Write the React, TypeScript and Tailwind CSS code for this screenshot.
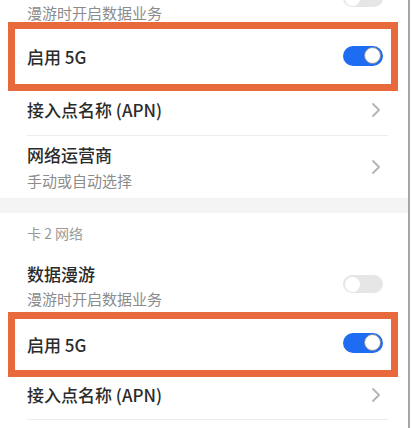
import React from "react";

const font = { fontFamily: '"Noto Sans CJK SC", "Noto Sans", sans-serif' };

function Chevron() {
  return (
    <svg width="10" height="16" viewBox="0 0 10 16" className="shrink-0 mr-[2px]">
      <polyline points="2,2 8,8 2,14" fill="none" stroke="#b3b3b3" strokeWidth="1.8" strokeLinecap="round" strokeLinejoin="round" />
    </svg>
  );
}

function Toggle({ on }: { on: boolean }) {
  return on ? (
    <div className="w-[40px] h-[20px] rounded-full bg-[#1d6cf2] flex items-center justify-end pr-[2px] shrink-0">
      <div className="w-[17px] h-[17px] rounded-full bg-white border border-[#7f8a99]" />
    </div>
  ) : (
    <div className="w-[40px] h-[18px] rounded-full bg-[#e6e6e6] flex items-center justify-start pl-[2px] shrink-0">
      <div className="w-[15px] h-[15px] rounded-full bg-white" />
    </div>
  );
}

function Box() {
  return <div className="absolute left-[8px] right-[10px] top-0 bottom-0 border-[7px] border-[#e8693c] pointer-events-none" />;
}

export default function App() {
  return (
    <div className="w-[411px] h-[428px] overflow-hidden bg-white" style={font}>
      <div className="w-[410px] h-[428px] border-r-2 border-[#a6a6a6] flex flex-col">
        {/* partial top row */}
        <div className="relative h-[22px] shrink-0 flex items-start justify-between pl-[27px] pr-[25px]">
          <div className="text-[15px] leading-[20px] text-[#8c8c8c] mt-[3px]">漫游时开启数据业务</div>
          <div className="-mt-[11px]">
            <Toggle on={false} />
          </div>
        </div>

        {/* 启用 5G */}
        <div className="relative h-[69px] shrink-0 flex items-center justify-between pl-[27px] pr-[25px]">
          <div className="text-[17px] leading-[24px] text-[#2b2b2b] font-medium">启用 5G</div>
          <div className="-mt-[2px]">
            <Toggle on />
          </div>
          <Box />
        </div>

        {/* APN */}
        <div className="h-[44px] shrink-0 flex items-start justify-between pl-[27px] pr-[25px] pt-[7px]">
          <div className="text-[17px] leading-[24px] text-[#2b2b2b] font-medium">接入点名称 (APN)</div>
          <div className="mt-[4px]">
            <Chevron />
          </div>
        </div>
        <div className="h-px bg-[#ececec] ml-[27px] mr-[20px] shrink-0" />

        {/* 网络运营商 */}
        <div className="h-[62px] shrink-0 flex items-center justify-between pl-[27px] pr-[25px]">
          <div className="flex flex-col">
            <div className="text-[17px] leading-[24px] text-[#2b2b2b] font-medium">网络运营商</div>
            <div className="text-[15px] leading-[20px] text-[#8c8c8c] mt-[4px]">手动或自动选择</div>
          </div>
          <Chevron />
        </div>

        {/* gap */}
        <div className="h-[15px] bg-[#f4f4f4] shrink-0" />

        {/* header */}
        <div className="h-[37px] shrink-0 pl-[27px] pt-[10px]">
          <div className="text-[14px] leading-[20px] text-[#9a9a9a]">卡 2 网络</div>
        </div>

        {/* 数据漫游 */}
        <div className="h-[62px] shrink-0 flex items-start justify-between pl-[27px] pr-[25px] pt-[12px]">
          <div className="flex flex-col">
            <div className="text-[17px] leading-[24px] text-[#2b2b2b] font-medium">数据漫游</div>
            <div className="text-[15px] leading-[20px] text-[#8c8c8c] mt-[3px]">漫游时开启数据业务</div>
          </div>
          <div className="mt-[13px]">
            <Toggle on={false} />
          </div>
        </div>

        {/* 启用 5G */}
        <div className="relative h-[65px] shrink-0 flex items-center justify-between pl-[27px] pr-[25px]">
          <div className="text-[17px] leading-[24px] text-[#2b2b2b] font-medium">启用 5G</div>
          <div className="-mt-[4px]">
            <Toggle on />
          </div>
          <Box />
        </div>

        {/* APN */}
        <div className="h-[42px] shrink-0 flex items-start justify-between pl-[27px] pr-[25px] pt-[6px]">
          <div className="text-[17px] leading-[24px] text-[#2b2b2b] font-medium">接入点名称 (APN)</div>
          <div className="mt-[4px]">
            <Chevron />
          </div>
        </div>
        <div className="h-px bg-[#ececec] ml-[27px] mr-[20px] shrink-0" />
      </div>
    </div>
  );
}
